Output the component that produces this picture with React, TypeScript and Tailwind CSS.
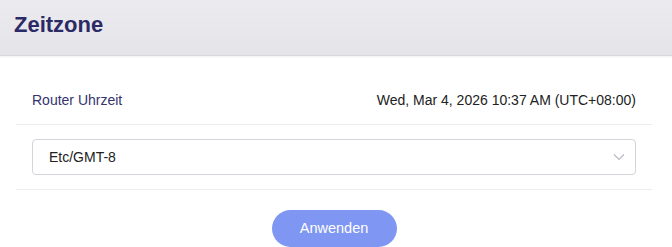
import type { FC } from 'react';

const ChevronDown: FC = () => (
  <svg width="12" height="8" viewBox="0 0 12 8" fill="none" className="text-[#b8b8c4]">
    <path d="M1 1.5l5 5 5-5" stroke="currentColor" strokeWidth="1.1" />
  </svg>
);

const App: FC = () => (
  <div className="w-[672px] h-[247px] overflow-hidden bg-white font-['Liberation_Sans',Arial,sans-serif]">
    <div className="h-[56px] flex items-center px-[14px] bg-gradient-to-b from-[#ebeaee] to-[#e5e4e9] border-b border-[#d9d8de] shadow-[0_1px_2px_rgba(0,0,0,0.06)]">
      <h1 className="text-[22px] font-bold text-[#2b2a66] -mt-[7px]">Zeitzone</h1>
    </div>

    <div className="pl-4 pr-5 pt-[21px]">
      <div className="h-12 px-4 flex items-center justify-between border-b border-[#ececf0]">
        <span className="text-[14px] text-[#34336f]">Router Uhrzeit</span>
        <span className="text-[14px] text-[#222]">Wed, Mar 4, 2026 10:37 AM (UTC+08:00)</span>
      </div>

      <div className="px-4 py-[14px] border-b border-[#ececf0]">
        <div className="h-[36px] rounded-[4px] border border-[#d4d4da] flex items-center justify-between pl-4 pr-[10px]">
          <span className="text-[14px] text-[#222]">Etc/GMT-8</span>
          <ChevronDown />
        </div>
      </div>

      <div className="flex justify-center mt-5">
        <button className="w-[125px] h-[37px] rounded-full bg-[#7f97f3] text-white text-[14.5px]">
          Anwenden
        </button>
      </div>
    </div>
  </div>
);

export default App;
